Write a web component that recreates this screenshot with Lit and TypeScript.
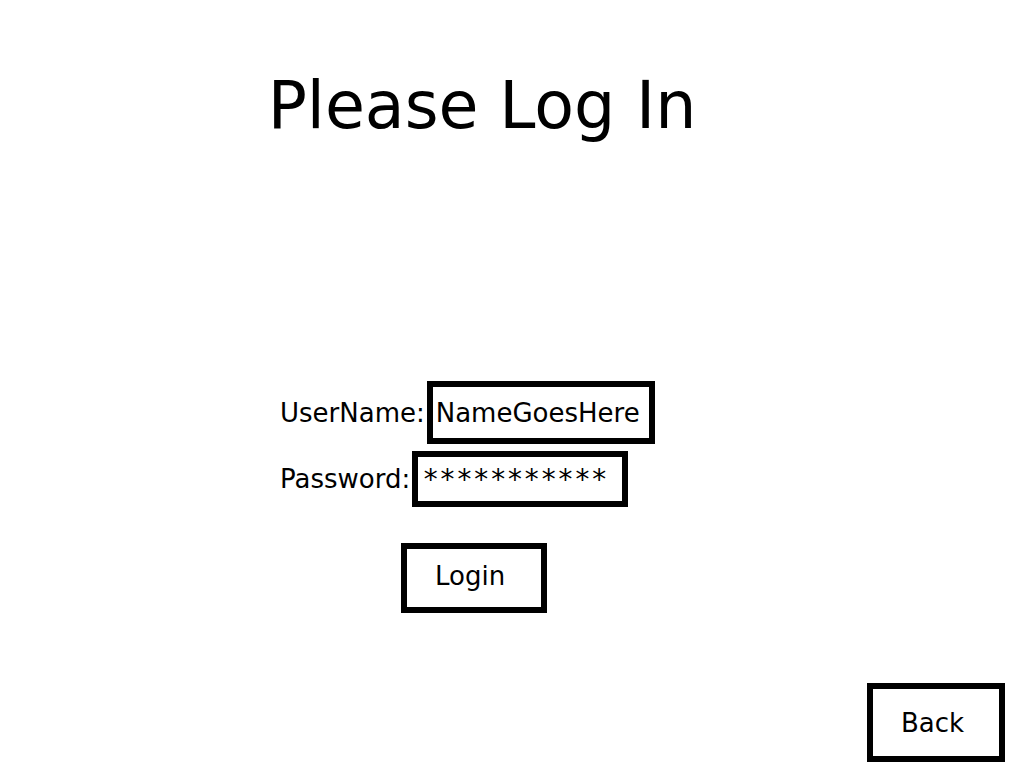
import { LitElement, html, css } from "lit";
import { customElement } from "lit/decorators.js";

@customElement("app-root")
export class AppRoot extends LitElement {
  static styles = css`
    :host {
      display: block;
      font-family: Verdana, "DejaVu Sans", sans-serif;
      font-size: 26px;
      color: #000;
      background: #fff;
    }
    * { box-sizing: border-box; }
    .page {
      min-height: 100vh;
      display: flex;
      flex-direction: column;
      padding: 66px 19px 6px;
    }
    .title {
      margin: 0 0 235px;
      padding-right: 60px;
      text-align: center;
      font-size: 65px;
      line-height: 80px;
      font-weight: 400;
    }
    .form {
      align-self: center;
      width: 375px;
      margin-right: 89px;
      display: flex;
      flex-direction: column;
    }
    .row { display: flex; align-items: center; gap: 2px; }
    .row + .row { margin-top: 7px; }
    .field, .button {
      font: inherit;
      color: inherit;
      background: #fff;
      border: 6px solid #000;
      border-radius: 0;
      outline: none;
      margin: 0;
    }
    .name { width: 228px; height: 63px; padding: 0 3px; }
    .secret {
      width: 216px;
      height: 56px;
      padding: 0 4px;
      font-family: "DejaVu Sans Mono", monospace;
      font-size: 28px;
    }
    .button { text-align: left; padding: 0 28px; }
    .login { width: 146px; height: 70px; margin: 36px 0 0 121px; padding-bottom: 4px; }
    .back { width: 138px; height: 79px; margin-top: auto; align-self: flex-end; }
  `;

  render() {
    return html`
      <main class="page">
        <h1 class="title">Please Log In</h1>
        <form class="form" @submit=${(e: Event) => e.preventDefault()}>
          <div class="row">
            <label for="user">UserName:</label>
            <input class="field name" id="user" type="text" value="NameGoesHere" />
          </div>
          <div class="row">
            <label for="pass">Password:</label>
            <input class="field secret" id="pass" type="text" value="***********" autocomplete="off" />
          </div>
          <button class="button login" type="submit">Login</button>
        </form>
        <button class="button back" type="button">Back</button>
      </main>
    `;
  }
}
